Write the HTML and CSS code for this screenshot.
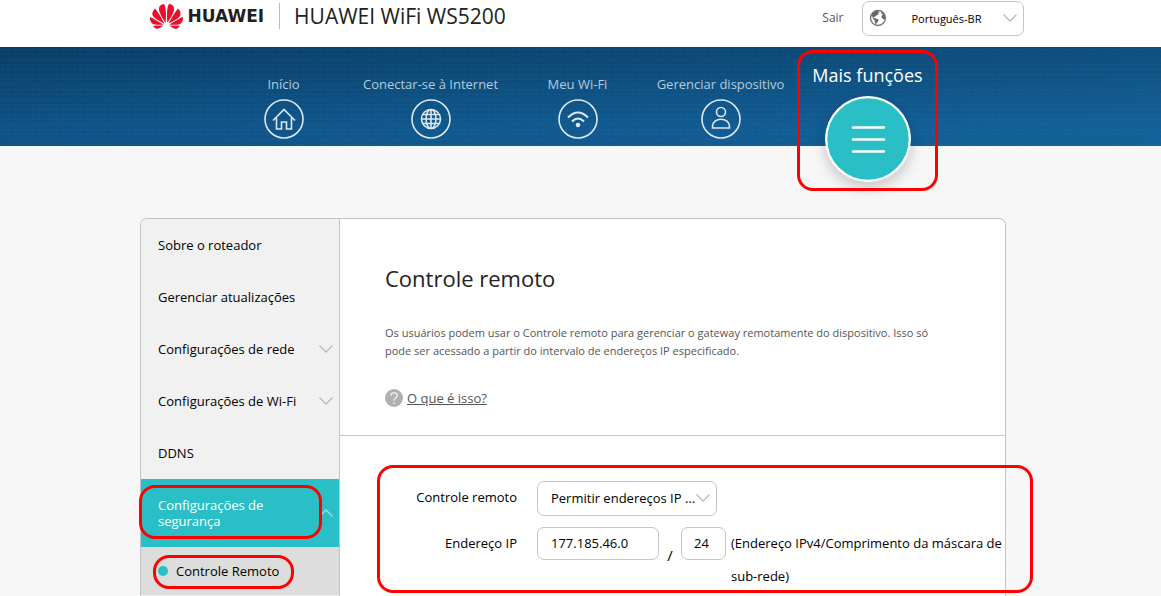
FILE: index.html
```html
<!DOCTYPE html>
<html lang="pt-BR">
<head>
<meta charset="utf-8">
<title>HUAWEI WiFi WS5200</title>
<link rel="stylesheet" href="styles.css">
</head>
<body>
<header class="topbar">
  <div class="topbar-row">
    <div class="brand">
      <svg class="brand-mark" viewBox="0 3 24 18" aria-hidden="true"><path d="M3.67 6.14S1.82 7.91 1.72 9.78v.35c.08 1.51 1.22 2.4 1.22 2.4 1.83 1.79 6.26 4.04 7.3 4.55 0 0 .06.03.1-.01l.02-.04v-.04C7.52 10.8 3.67 6.14 3.67 6.14zM9.65 18.6c-.02-.08-.1-.08-.1-.08l-7.38.26c.8 1.43 2.15 2.53 3.56 2.2.96-.25 3.16-1.78 3.88-2.3.06-.05.04-.09.04-.09zm.08-.78C6.49 15.63.21 12.28.21 12.28c-.15.46-.2.9-.21 1.3v.07c0 1.07.4 1.82.4 1.82.8 1.69 2.34 2.2 2.34 2.2.7.3 1.4.31 1.4.31.12.02 4.4 0 5.54 0 .05 0 .08-.05.08-.05v-.06c0-.03-.03-.05-.03-.05zM9.06 3.19a3.42 3.42 0 00-2.57 3.15v.41c.03.6.16 1.05.16 1.05.66 2.9 3.86 7.65 4.55 8.65.05.05.1.03.1.03a.1.1 0 00.06-.1c1.06-10.6-1.11-13.42-1.11-13.42-.32.02-1.19.23-1.19.23zm8.299 2.27s-.49-1.8-2.44-2.28c0 0-.57-.14-1.17-.22 0 0-2.18 2.81-1.12 13.43.01.07.06.08.06.08.07.03.1-.03.1-.03.72-1.03 3.9-5.76 4.55-8.64 0 0 .36-1.4.02-2.34zm-2.92 13.07s-.07 0-.09.05c0 0-.01.07.03.1.7.51 2.85 2 3.88 2.3 0 0 .16.05.43.06h.14c.69-.02 1.9-.37 3-2.26l-7.4-.25zm7.83-8.41c.14-2.06-1.94-3.97-1.94-3.98 0 0-3.85 4.66-6.67 10.8 0 0-.03.08.02.13l.04.01h.06c1.06-.53 5.46-2.77 7.28-4.54 0 0 1.15-.93 1.21-2.42zm1.52 2.14s-6.28 3.37-9.52 5.55c0 0-.05.04-.03.11 0 0 .03.06.07.06 1.16 0 5.56 0 5.67-.02 0 0 .57-.02 1.27-.29 0 0 1.56-.5 2.37-2.27 0 0 .73-1.45.17-3.14z"/></svg>
      <span class="brand-name">HUAWEI</span>
      <span class="brand-model">HUAWEI WiFi WS5200</span>
    </div>
    <div class="account">
      <a class="logout" href="#">Sair</a>
      <div class="picker">
        <svg class="picker-globe" viewBox="0 0 18 18" aria-hidden="true"><circle cx="9" cy="9" r="7.5" fill="#fff" stroke="#777" stroke-width="1.4"/><path fill="#666" d="M3 5.200C4 3.500 6 2 8.500 1.800L10.500 3 8.800 4.200 9.500 5.400 7.300 6.500 6 8 4.300 7.400 5.200 9 7 9.400 9.600 10.600 9 12.600 7.600 14 7.200 16C6 14.500 5.800 12.500 5.600 11 3.800 9.800 2.800 7.500 3 5.200zM12 3.200l2.300 1.100 1.500 2.600.3 3.600-2-.4-1.700-1.800.5-1.900 1.100-.8-1.600-.9z"/></svg>
        <select class="select language" aria-label="Idioma"><option>Português-BR</option></select>
        <svg class="chevron picker-chevron" viewBox="0 0 14 8" aria-hidden="true"><path d="M.5.500 7 7 13.500.5"/></svg>
      </div>
    </div>
  </div>
</header>

<nav class="mainnav" aria-label="Principal">
  <div class="wrap mainnav-grid">
    <a class="tab" href="#"><span>Início</span>
      <svg class="tab-icon" viewBox="0 0 40 40" aria-hidden="true"><circle cx="20" cy="20" r="19"/><path d="M9 21.500 20 10.500 31 21.500M12.500 19v11h5v-7h5v7h5V19"/></svg></a>
    <a class="tab" href="#"><span>Conectar-se à Internet</span>
      <svg class="tab-icon" viewBox="0 0 40 40" aria-hidden="true"><circle cx="20" cy="20" r="19"/><circle cx="20" cy="20" r="9.500"/><ellipse cx="20" cy="20" rx="5" ry="9.500"/><path d="M20 10.500v19M10.500 20h19M12 15.500h16M12 24.500h16"/></svg></a>
    <a class="tab" href="#"><span>Meu Wi-Fi</span>
      <svg class="tab-icon" viewBox="0 0 40 40" aria-hidden="true"><circle cx="20" cy="20" r="19"/><path d="M10 18.500Q20 8.500 30 18.500M14 22.500Q20 16.500 26 22.500" stroke-width="2"/><circle class="dot" cx="20" cy="26" r="2.300"/></svg></a>
    <a class="tab" href="#"><span>Gerenciar dispositivo</span>
      <svg class="tab-icon" viewBox="0 0 40 40" aria-hidden="true"><circle cx="20" cy="20" r="19"/><circle cx="20" cy="13" r="4.500"/><path d="M11.500 29v-1.500c0-4.500 4-7.200 8.500-7.200s8.500 2.700 8.500 7.200V29z"/></svg></a>
    <a class="tab tab-active" href="#"><span>Mais funções</span>
      <svg class="more-icon" viewBox="0 0 86 86" aria-hidden="true"><circle cx="43" cy="43" r="42"/><path d="M28 31.500h31M28 43.500h31M28 55.500h31"/></svg>
      <i class="mark mark-more"></i></a>
  </div>
</nav>

<main class="stage">
  <div class="wrap panel">
    <nav class="side" aria-label="Configurações">
      <a class="side-item" href="#">Sobre o roteador</a>
      <a class="side-item" href="#">Gerenciar atualizações</a>
      <a class="side-item" href="#">Configurações de rede<svg class="chevron" viewBox="0 0 14 8" aria-hidden="true"><path d="M.5.500 7 7 13.500.5"/></svg></a>
      <a class="side-item" href="#">Configurações de Wi-Fi<svg class="chevron" viewBox="0 0 14 8" aria-hidden="true"><path d="M.5.500 7 7 13.500.5"/></svg></a>
      <a class="side-item" href="#">DDNS</a>
      <a class="side-item side-open" href="#"><span class="side-label">Configurações de segurança</span><svg class="chevron chevron-up" viewBox="0 0 14 8" aria-hidden="true"><path d="M.5 7.500 7 1 13.500 7.500"/></svg><i class="mark mark-security"></i></a>
      <a class="side-sub" href="#">Controle Remoto<i class="mark mark-remote"></i></a>
    </nav>
    <div class="content">
      <section class="intro">
        <h1 class="title">Controle remoto</h1>
        <p class="lead">Os usuários podem usar o Controle remoto para gerenciar o gateway remotamente do dispositivo. Isso só pode ser acessado a partir do intervalo de endereços IP especificado.</p>
        <p class="help"><svg class="help-icon" viewBox="0 0 18 18" aria-hidden="true"><circle cx="9" cy="9" r="9"/><path d="M5.800 6.800c0-4 6.400-4 6.400-.3 0 2.400-3.200 2.500-3.200 5.200"/><path d="M9 13.300v1.700"/></svg><a class="help-link" href="#">O que é isso?</a></p>
      </section>
      <form class="form">
        <label class="label" for="mode">Controle remoto</label>
        <div class="picker picker-mode">
          <select class="select mode" id="mode"><option>Permitir endereços IP ...</option></select>
          <svg class="chevron picker-chevron" viewBox="0 0 14 8" aria-hidden="true"><path d="M.5.500 7 7 13.500.5"/></svg>
        </div>
        <label class="label" for="ip">Endereço IP</label>
        <div class="address">
          <input class="input ip" id="ip" type="text" value="177.185.46.0">
          <span class="slash">/</span>
          <input class="input mask" id="mask" type="text" value="24">
          <label class="hint" for="mask">(Endereço IPv4/Comprimento da máscara de sub-rede)</label>
        </div>
        <i class="mark mark-form"></i>
      </form>
    </div>
  </div>
</main>
</body>
</html>
```
FILE: styles.css
```css
* { box-sizing: border-box; }

body {
  margin: 0;
  min-height: 100vh;
  display: flex;
  flex-direction: column;
  overflow: hidden;
  background: #f7f7f7;
  color: #000;
  font-family: "Open Sans", "Noto Sans", sans-serif;
  font-size: 13px;
}

a { color: inherit; text-decoration: none; }

.wrap {
  width: 100%;
  max-width: 866px;
  margin: 0 auto;
}

/* Top bar */
.topbar {
  height: 47px;
  padding: 1px 0 0 12px;
  background: #fff;
}
.topbar-row {
  max-width: 874px;
  margin: 0 auto;
  display: flex;
  justify-content: space-between;
  align-items: flex-start;
}
.brand {
  height: 30px;
  display: flex;
  align-items: center;
}
.brand-mark { width: 33px; height: 25px; fill: #e8112d; }
.brand-name {
  margin-left: 5px;
  font: bold 17px "DejaVu Sans", sans-serif;
  color: #231f20;
}
.brand-model {
  margin-left: 15px;
  padding-left: 14px;
  border-left: 1px solid #bbb;
  font-size: 21px;
  line-height: 26px;
  color: #222;
}
.account {
  display: flex;
  align-items: center;
  gap: 18px;
}
.logout { padding-bottom: 2px; font-size: 12px; color: #555; }

.picker { position: relative; display: flex; }
.select {
  appearance: none;
  height: 35px;
  border: 1px solid #c4c4c4;
  border-radius: 7px;
  background: #fff;
  color: #000;
  font-family: inherit;
}
.language { width: 162px; padding: 0 36px 1px 49px; font-size: 11px; }
.mode { width: 180px; padding: 0 4px 2px 13px; font-size: 13px; }
.picker-mode { justify-self: start; }
.picker-globe { position: absolute; left: 7px; top: 8px; width: 18px; height: 18px; }
.chevron {
  width: 14px;
  height: 8px;
  flex: none;
  fill: none;
  stroke: #bbb;
  stroke-width: 1.3;
}
.picker-chevron { position: absolute; right: 7px; top: 13px; pointer-events: none; }

/* Main navigation */
.mainnav {
  height: 99px;
  padding-right: 15px;
  background:
    linear-gradient(to bottom, rgba(4, 44, 78, .45), rgba(16, 88, 144, .5) 80%),
    radial-gradient(ellipse 2px 1px, rgba(80, 150, 170, .22) 80%, transparent) 0 0 / 6px 5px,
    linear-gradient(to right, #0d4c7c, #176aa4);
}
.mainnav-grid {
  display: grid;
  grid-template-columns: 147px 147px 147px 139px 155px;
  padding-left: 70px;
}
.tab {
  position: relative;
  display: flex;
  flex-direction: column;
  align-items: center;
  padding-top: 27px;
  gap: 5px;
  line-height: 20px;
  white-space: nowrap;
  color: #b4cbdd;
}
.tab-icon {
  width: 40px;
  height: 40px;
  fill: none;
  stroke: #dce8f1;
  stroke-width: 1.6;
}
.tab-icon .dot { fill: #dce8f1; stroke: none; }
.tab-active {
  padding-top: 16px;
  gap: 9px;
  line-height: 24px;
  font-size: 18px;
  color: #fff;
}
.more-icon {
  width: 86px;
  height: 86px;
  border-radius: 50%;
  box-shadow: 0 6px 14px rgba(0, 0, 0, .2);
  fill: #2abfc7;
  stroke: #fff;
  stroke-width: 2.6;
  stroke-linecap: round;
}

/* Highlight outlines */
.mark {
  position: absolute;
  z-index: 2;
  border: 3px solid #f00;
  border-radius: 16px;
  pointer-events: none;
}
.mark-more { left: 7px; right: 7px; top: 3px; height: 141px; }
.mark-security { left: -2px; right: 17px; top: 6px; bottom: 8px; }
.mark-remote { left: 12px; right: 45px; top: 8px; bottom: 6px; }
.mark-form { left: 37px; right: -28px; top: 29px; height: 128px; }

/* Panel */
.stage {
  flex: 1;
  display: flex;
  padding: 72px 15px 0 0;
}
.panel {
  display: flex;
  border: 1px solid #c4c4c4;
  border-bottom: 0;
  border-radius: 7px 7px 0 0;
  background: #fff;
}
.side {
  width: 199px;
  flex: none;
  border-right: 1px solid #c4c4c4;
  border-top-left-radius: 6px;
  background: #f1f1f1;
}
.side-item {
  position: relative;
  display: flex;
  align-items: center;
  justify-content: space-between;
  min-height: 52px;
  padding: 0 6px 0 17px;
}
.side-open {
  min-height: 68px;
  background: #2abfc7;
  color: #fff;
  line-height: 16px;
}
.side-label { width: 130px; }
.chevron-up { stroke: #9fe3e7; }
.side-sub {
  position: relative;
  display: flex;
  align-items: center;
  gap: 8px;
  height: 48px;
  padding-left: 17px;
  background: #ddd;
}
.side-sub::before {
  content: "";
  width: 10px;
  height: 10px;
  border-radius: 50%;
  background: #2abfc7;
}

/* Content */
.content { flex: 1; min-width: 0; }
.intro {
  padding: 43px 45px 27px;
  border-bottom: 1px solid #c4c4c4;
}
.title {
  margin: 0;
  font-size: 22px;
  font-weight: 400;
  line-height: 32px;
  color: #222;
}
.lead {
  max-width: 560px;
  margin: 30px 0 0;
  font-size: 11px;
  line-height: 18px;
  color: #555;
}
.help {
  display: flex;
  align-items: center;
  gap: 4px;
  margin: 28px 0 0;
  line-height: 20px;
  color: #555;
}
.help-icon { width: 18px; height: 18px; fill: #b0b0b0; }
.help-icon path { fill: none; stroke: #e8e8e8; stroke-width: 1.6; }
.help-link { text-decoration: underline; }

.form {
  position: relative;
  display: grid;
  grid-template-columns: 177px 1fr;
  column-gap: 20px;
  row-gap: 11px;
  padding-top: 45px;
}
.label { text-align: right; line-height: 33px; }
.address { display: flex; align-items: flex-start; }
.input {
  height: 33px;
  border: 1px solid #c4c4c4;
  border-radius: 7px;
  padding: 0 13px 2px;
  background: #fff;
  color: #000;
  font-family: inherit;
  font-size: 13px;
}
.ip { width: 122px; }
.mask { width: 45px; padding: 0 12px 2px; }
.slash { width: 22px; padding-top: 18px; font-size: 15px; text-align: center; }
.hint { flex: 1; margin-left: 5px; line-height: 33px; }
```
